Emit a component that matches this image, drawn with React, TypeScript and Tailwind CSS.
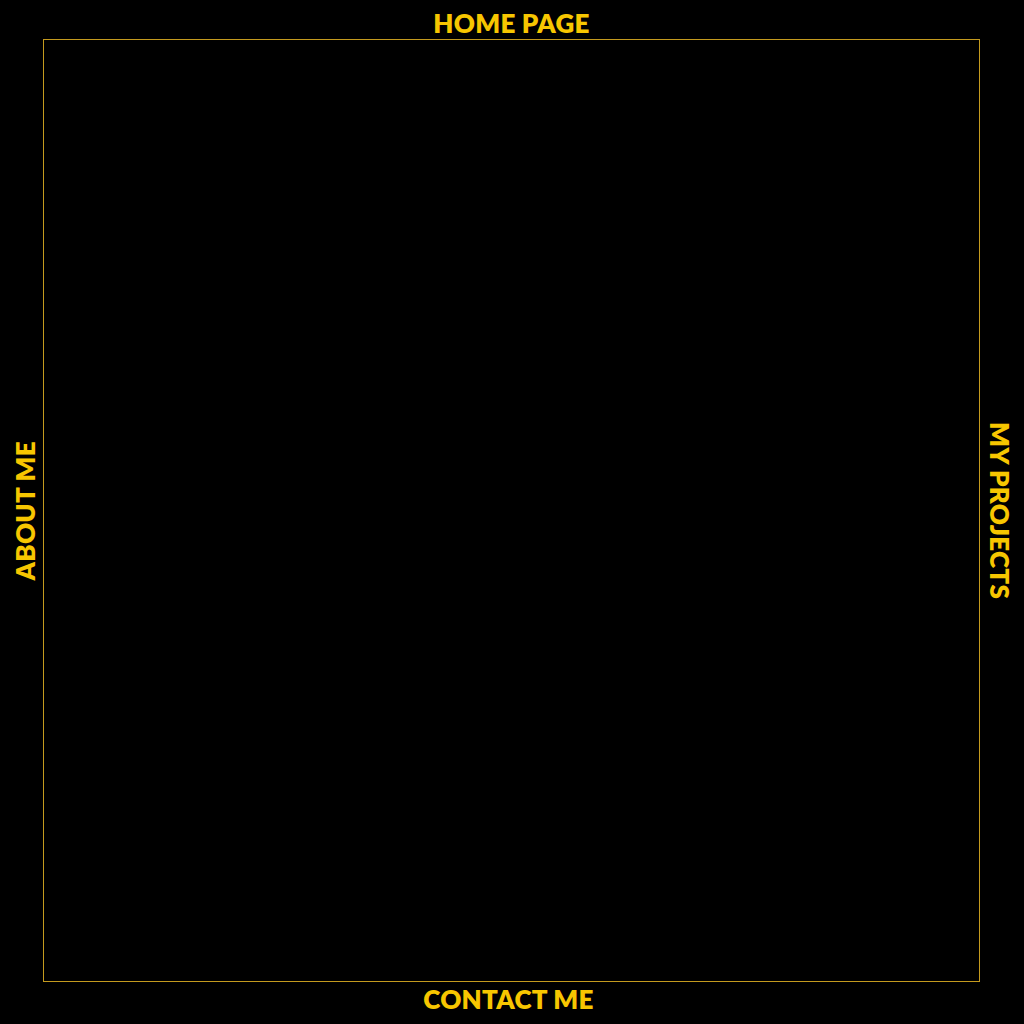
import React from 'react';

const navText = "font-['Lato',sans-serif] font-extrabold text-[26px] leading-none tracking-[0.01em] text-[#f7c600] uppercase";

const App: React.FC = () => {
  return (
    <div className="grid h-screen w-screen grid-cols-[43px_937px_44px] grid-rows-[39px_943px_42px] bg-black">
      <div />
      <div className="flex items-center justify-center pt-[7px]">
        <span className={navText}>Home Page</span>
      </div>
      <div />

      <div className="flex items-center justify-center pl-[6px]">
        <span className={`${navText} rotate-180 [writing-mode:vertical-rl]`}>About Me</span>
      </div>
      {/* frame: 1px gold line around the empty content area */}
      <div className="flex bg-[#c49a1e] p-px">
        <div className="flex-1 bg-black" />
      </div>
      <div className="flex items-center justify-center pr-[5px]">
        <span className={`${navText} [writing-mode:vertical-rl]`}>My Projects</span>
      </div>

      <div />
      <div className="flex items-center justify-center pb-[9px] pr-[6px]">
        <span className={navText}>Contact Me</span>
      </div>
      <div />
    </div>
  );
};

export default App;
